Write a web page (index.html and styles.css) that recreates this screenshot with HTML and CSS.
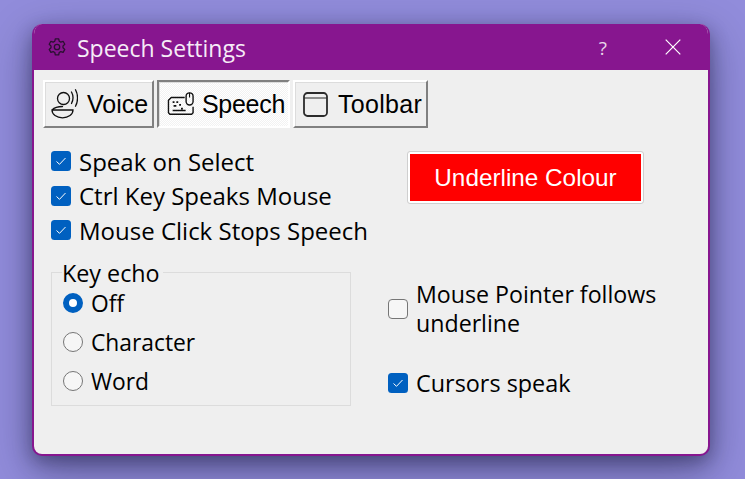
FILE: index.html
```html
<!DOCTYPE html>
<html lang="en">
<head>
<meta charset="utf-8">
<title>Speech Settings</title>
<link rel="stylesheet" href="styles.css">
</head>
<body>
<div class="window">
  <header class="titlebar">
    <svg class="gear" width="20" height="20" viewBox="0 0 20 20" fill="none" stroke="#2a1030" stroke-width="1.3" stroke-linejoin="round"><path d="M8.300 1.800h3.400l.5 2.400 1.600.9 2.300-.8 1.700 3-1.800 1.600v1.900l1.800 1.600-1.700 3-2.300-.8-1.600.9-.5 2.400H8.300l-.5-2.400-1.600-.9-2.300.8-1.700-3 1.800-1.600V8.900L2.200 7.300l1.700-3 2.300.8 1.600-.9z"/><circle cx="10" cy="10" r="2.700"/></svg>
    <span class="title">Speech Settings</span>
    <span class="help">?</span>
    <svg class="close" width="16" height="16" viewBox="0 0 16 16" stroke="#fff" stroke-width="1.200" fill="none"><path d="M.7.7l14.600 14.600M15.300.7L.7 15.300"/></svg>
  </header>
  <div class="body">
    <nav class="tabs">
      <div class="tab tab-voice">
        <svg width="27" height="30" viewBox="0 0 27 30" fill="none" stroke="#111" stroke-width="1.300" stroke-linecap="round"><circle cx="12.500" cy="9.500" r="6"/><path d="M20.500 3c1.800 3.300 1.800 8 0 11.500M24.500 .8c2.700 4.800 2.700 11.600 0 16.500M1 21c2-2 6-3.500 10.500-3.500M1 21h21c0 4.500-4.500 7.800-10.500 7.800S1 25.500 1 21z"/></svg>
        <span>Voice</span>
      </div>
      <div class="tab tab-active tab-speech">
        <svg width="28" height="26" viewBox="0 0 30 28" fill="none" stroke="#111" stroke-width="1.500" stroke-linejoin="round"><path d="M19 7H4.500L1.500 10v13.500l1.500 1.500h23.500l1.500-1.500V17"/><rect x="20.500" y="2" width="7.500" height="13" rx="3.700"/><path d="M24.200 2v5" stroke-width="1.200"/><path d="M6 12h2M10 12h2M7 16h3M13 15h2M15 19h2M6 21h14" stroke-width="1.800"/></svg>
        <span>Speech</span>
      </div>
      <div class="tab tab-toolbar">
        <svg width="25" height="25" viewBox="0 0 25 25" fill="none" stroke="#2b2b2b" stroke-width="1.800"><rect x="1" y="1" width="23" height="23" rx="3.500"/><path d="M1 6h23" stroke-width="1.200"/></svg>
        <span>Toolbar</span>
      </div>
    </nav>
    <div class="columns">
      <section class="left">
        <div class="checks">
          <div class="option">
            <svg class="box" viewBox="0 0 20 20"><rect width="20" height="20" rx="3.500" fill="#0060c0"/><path d="M5.500 10.500l3 2.800 6-6.300" fill="none" stroke="#fff" stroke-width="1"/></svg>
            <span>Speak on Select</span>
          </div>
          <div class="option">
            <svg class="box" viewBox="0 0 20 20"><rect width="20" height="20" rx="3.500" fill="#0060c0"/><path d="M5.500 10.500l3 2.800 6-6.300" fill="none" stroke="#fff" stroke-width="1"/></svg>
            <span>Ctrl Key Speaks Mouse</span>
          </div>
          <div class="option">
            <svg class="box" viewBox="0 0 20 20"><rect width="20" height="20" rx="3.500" fill="#0060c0"/><path d="M5.500 10.500l3 2.800 6-6.300" fill="none" stroke="#fff" stroke-width="1"/></svg>
            <span>Mouse Click Stops Speech</span>
          </div>
        </div>
        <fieldset class="group">
          <legend>Key echo</legend>
          <div class="radio"><span class="dot dot-on"></span><span>Off</span></div>
          <div class="radio"><span class="dot"></span><span>Character</span></div>
          <div class="radio"><span class="dot"></span><span>Word</span></div>
        </fieldset>
      </section>
      <section class="right">
        <div class="colour-wrap"><div class="colour">Underline Colour</div></div>
        <div class="option option-tall">
          <span class="box box-empty"></span>
          <span>Mouse Pointer follows<br>underline</span>
        </div>
        <div class="option option-last">
          <svg class="box" viewBox="0 0 20 20"><rect width="20" height="20" rx="3.500" fill="#0060c0"/><path d="M5.500 10.500l3 2.800 6-6.300" fill="none" stroke="#fff" stroke-width="1"/></svg>
          <span>Cursors speak</span>
        </div>
      </section>
    </div>
  </div>
</div>
</body>
</html>
```
FILE: styles.css
```css
* { box-sizing: border-box; }
html, body { margin: 0; height: 100%; }
body {
  width: 745px;
  height: 479px;
  overflow: hidden;
  padding: 24px 35px 23px 32px;
  background: #918cdb;
  font-family: "Open Sans", "Noto Sans", sans-serif;
  color: #000;
}
.window {
  width: 678px;
  height: 432px;
  border: 2px solid #87168f;
  border-top: 0;
  border-radius: 10px;
  background: #efefef;
  overflow: hidden;
  display: flex;
  flex-direction: column;
  box-shadow: 0 6px 18px rgba(15, 14, 45, .35), 0 14px 44px rgba(15, 14, 45, .4);
}
.titlebar {
  height: 46px;
  flex: none;
  background: #87168f;
  display: flex;
  align-items: center;
  padding-left: 13px;
  color: #fff;
}
.gear { flex: none; }
.title { margin: 2px 0 0 10px; font-size: 23px; flex: 1; color: #f6ecf7; }
.help { margin: 2px 58px 0 0; font-size: 19px; color: #e8d6ea; }
.close { margin-right: 27px; flex: none; }
.body { flex: 1; padding: 10px 9px 0; }
.tabs { display: flex; gap: 3px; }
.tab {
  height: 48px;
  display: flex;
  align-items: center;
  border: 2px solid #fff;
  border-right-color: #808080;
  border-bottom-color: #808080;
  box-shadow: inset 1px 1px 0 #dcdcdc;
  font-family: "Liberation Sans", Arial, sans-serif;
  font-size: 25px;
}
.tab-voice { width: 111px; padding-left: 6px; gap: 9px; }
.tab-speech { width: 133px; padding-left: 8px; gap: 7px; letter-spacing: -.3px; }
.tab-toolbar { width: 135px; padding-left: 8px; gap: 10px; letter-spacing: .3px; }
.tab-active {
  border-color: #808080 #fff #fff #808080;
  background: repeating-conic-gradient(#fff 0 25%, #f2f2f2 0 50%) 0 0 / 2px 2px;
}
.columns { display: flex; padding: 16px 0 0 8px; }
.left { width: 337px; flex: none; }
.right { padding-top: 8px; }
.checks { display: flex; flex-direction: column; }
.option {
  display: flex;
  align-items: center;
  gap: 8px;
  height: 34.500px;
  font-size: 24px;
  line-height: 29px;
}
.box { width: 20px; height: 20px; flex: none; display: block; }
.box-empty { border: 1px solid #767676; border-radius: 4px; background: #f6f6f6; }
.group {
  margin: 14px 0 0;
  padding: 0 0 0 11px;
  width: 300px;
  height: 144px;
  border: 1px solid #dcdcdc;
}
.group legend {
  margin-left: -1px;
  padding: 0 3px 0 0;
  font-size: 23.300px;
  line-height: 22px;
}
.radio {
  display: flex;
  align-items: center;
  gap: 8px;
  height: 39px;
  font-size: 22.800px;
}
.dot {
  width: 20px;
  height: 20px;
  flex: none;
  border: 1px solid #767676;
  border-radius: 50%;
  background: #f6f6f6;
}
.dot-on { border: 6px solid #0060c0; background: #fff; }
.colour-wrap { margin-left: 20px; }
.colour {
  width: 235px;
  height: 51px;
  border: 2px solid #fff;
  outline: 1px solid #cfcfcf;
  border-radius: 2px;
  background: #ff0000;
  color: #fff;
  font-family: "Liberation Sans", Arial, sans-serif;
  font-size: 24.300px;
  display: flex;
  align-items: center;
  justify-content: center;
}
.option-tall { height: 60px; margin-top: 76px; font-size: 23.200px; }
.option-last { margin-top: 27px; font-size: 23.400px; }
```
